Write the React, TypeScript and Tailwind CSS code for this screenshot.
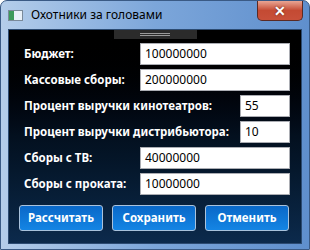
import React from "react";

const rows = [
  { label: "Бюджет:", value: "100000000", short: false },
  { label: "Кассовые сборы:", value: "200000000", short: false },
  { label: "Процент выручки кинотеатров:", value: "55", short: true },
  { label: "Процент выручки дистрибьютора:", value: "10", short: true },
  { label: "Сборы с ТВ:", value: "40000000", short: false },
  { label: "Сборы с проката:", value: "10000000", short: false },
];

const font = { fontFamily: '"Segoe UI", "Noto Sans", "Liberation Sans", sans-serif' };

export default function App() {
  return (
    <div
      className="w-[310px] h-[250px] flex flex-col rounded-t-[7px] border border-[#3a5a85] bg-gradient-to-r from-[#b4cdea] via-[#7ca6da] to-[#5f8fcd] overflow-hidden"
      style={font}
    >
      {/* Title bar */}
      <div className="h-[28px] flex items-start shrink-0">
        <div className="mt-[9px] ml-[7px] w-[15px] h-[11px] border border-[#7a8a9a] bg-white flex">
          <div className="w-[5px] h-full bg-[#3c9a5a]" />
          <div className="flex-1 bg-[#e8f0f8]" />
        </div>
        <span className="ml-[8px] mt-[7px] text-[12px] leading-[14px] text-black">Охотники за головами</span>
        <div className="ml-auto mr-[6px] w-[46px] h-[20px] rounded-b-[5px] border border-t-0 border-[#5a2a24] bg-gradient-to-b from-[#e8a594] via-[#c44a33] to-[#c8503a] flex items-center justify-center">
          <span className="text-white text-[14px] font-bold leading-none" style={{ textShadow: "0 0 2px #5a1a10" }}>✕</span>
        </div>
      </div>

      {/* Client area */}
      <div className="ml-[7px] w-[294px] h-[215px] border border-[#2c4b72] bg-gradient-to-b from-black via-[#03101f] to-[#0c2a4c] flex flex-col">
        <div className="mx-auto w-[83px] h-[9px] bg-[#2b2b2b] flex flex-col items-center justify-center gap-[1px] shrink-0">
          <div className="w-[30px] h-[1px] bg-[#9a9a9a]" />
          <div className="w-[30px] h-[1px] bg-[#9a9a9a]" />
        </div>

        <div className="mt-[4px] pl-[15px] pr-[11px] flex flex-col gap-[4px]">
          {rows.map((r) => (
            <div key={r.label} className="h-[22px] flex items-center justify-between">
              <span className="text-white text-[11.5px] font-bold">{r.label}</span>
              <div
                className={`${r.short ? "w-[50px]" : "w-[150px]"} h-[22px] bg-white border border-[#abadb3] flex items-center pl-[4px] text-[12px] text-black`}
              >
                {r.value}
              </div>
            </div>
          ))}
        </div>

        <div className="mt-[10px] pl-[10px] flex gap-[9px]">
          {["Рассчитать", "Сохранить", "Отменить"].map((b) => (
            <div
              key={b}
              className="w-[84px] h-[26px] rounded-[3px] border border-[#a9c2dc] bg-gradient-to-b from-[#0a68c8] to-[#1485e4] flex items-center justify-center text-white text-[11.5px] font-bold"
            >
              {b}
            </div>
          ))}
        </div>
      </div>
    </div>
  );
}
